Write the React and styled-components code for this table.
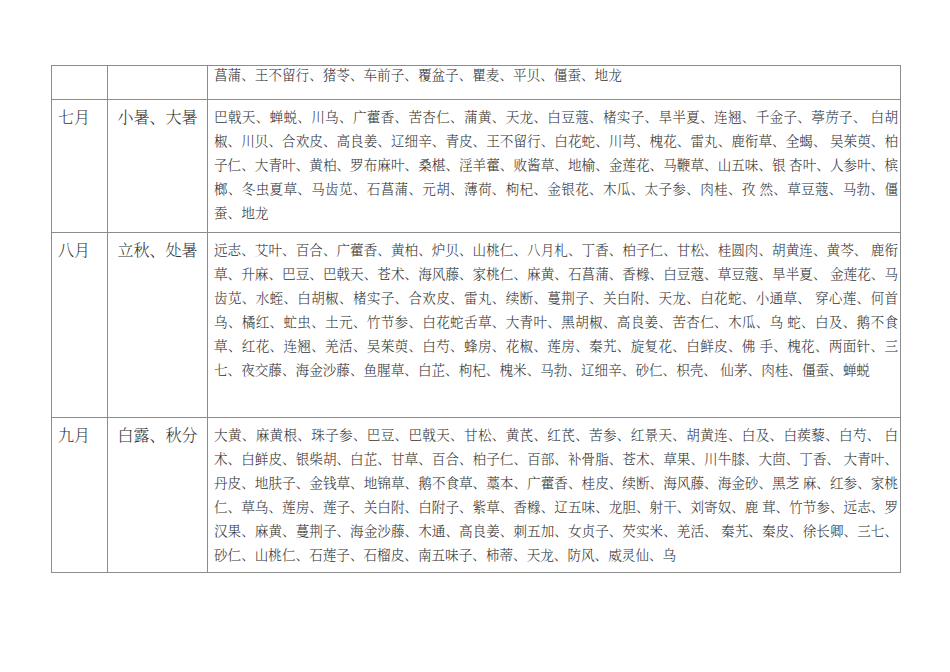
import styled, { createGlobalStyle } from 'styled-components'

const rows = [
  {
    month: '',
    term: '',
    height: 34,
    top: 0,
    lines: ['菖蒲、王不留行、猪苓、车前子、覆盆子、瞿麦、平贝、僵蚕、地龙']
  },
  {
    month: '七月',
    term: '小暑、大暑',
    height: 133,
    top: 6,
    lines: [
      '巴戟天、蝉蜕、川乌、广藿香、苦杏仁、蒲黄、天龙、白豆蔻、楮实子、旱半夏、连翘、千金子、葶苈子、 白胡',
      '椒、川贝、合欢皮、高良姜、辽细辛、青皮、王不留行、白花蛇、川芎、槐花、雷丸、鹿衔草、全蝎、 吴茱萸、柏',
      '子仁、大青叶、黄柏、罗布麻叶、桑椹、淫羊藿、败酱草、地榆、金莲花、马鞭草、山五味、银 杏叶、人参叶、槟',
      '榔、冬虫夏草、马齿苋、石菖蒲、元胡、薄荷、枸杞、金银花、木瓜、太子参、肉桂、孜 然、草豆蔻、马勃、僵',
      '蚕、地龙'
    ]
  },
  {
    month: '八月',
    term: '立秋、处暑',
    height: 185,
    top: 6,
    lines: [
      '远志、艾叶、百合、广藿香、黄柏、炉贝、山桃仁、八月札、丁香、柏子仁、甘松、桂圆肉、胡黄连、黄芩、 鹿衔',
      '草、升麻、巴豆、巴戟天、苍术、海风藤、家桃仁、麻黄、石菖蒲、香橼、白豆蔻、草豆蔻、旱半夏、 金莲花、马',
      '齿苋、水蛭、白胡椒、楮实子、合欢皮、雷丸、续断、蔓荆子、关白附、天龙、白花蛇、小通草、 穿心莲、何首',
      '乌、橘红、虻虫、土元、竹节参、白花蛇舌草、大青叶、黑胡椒、高良姜、苦杏仁、木瓜、乌 蛇、白及、鹅不食',
      '草、红花、连翘、羌活、吴茱萸、白芍、蜂房、花椒、莲房、秦艽、旋复花、白鲜皮、佛 手、槐花、两面针、三',
      '七、夜交藤、海金沙藤、鱼腥草、白芷、枸杞、槐米、马勃、辽细辛、砂仁、枳壳、 仙茅、肉桂、僵蚕、蝉蜕'
    ]
  },
  {
    month: '九月',
    term: '白露、秋分',
    height: 155,
    top: 6,
    lines: [
      '大黄、麻黄根、珠子参、巴豆、巴戟天、甘松、黄芪、红芪、苦参、红景天、胡黄连、白及、白蒺藜、白芍、 白',
      '术、白鲜皮、银柴胡、白芷、甘草、百合、柏子仁、百部、补骨脂、苍术、草果、川牛膝、大茴、丁香、 大青叶、',
      '丹皮、地肤子、金钱草、地锦草、鹅不食草、藁本、广藿香、桂皮、续断、海风藤、海金砂、黑芝 麻、红参、家桃',
      '仁、草乌、莲房、莲子、关白附、白附子、紫草、香橼、辽五味、龙胆、射干、刘寄奴、鹿 茸、竹节参、远志、罗',
      '汉果、麻黄、蔓荆子、海金沙藤、木通、高良姜、刺五加、女贞子、芡实米、羌活、 秦艽、秦皮、徐长卿、三七、',
      '砂仁、山桃仁、石莲子、石榴皮、南五味子、柿蒂、天龙、防风、威灵仙、乌'
    ]
  }
]

export default function App() {
  return (
    <>
      <GlobalStyle />
      <Page>
        <Sheet>
          <colgroup>
            <col style={{ width: 56 }} />
            <col style={{ width: 100 }} />
            <col />
          </colgroup>
          <tbody>
            {rows.map((row, i) => (
              <Row key={i} $h={row.height}>
                <MonthCell $top={row.top}>{row.month}</MonthCell>
                <TermCell $top={row.top}>{row.term}</TermCell>
                <DrugCell $top={row.top}>
                  {row.lines.map((line, j) => (
                    <Line
                      key={j}
                      $last={j === row.lines.length - 1}
                      $tight={row.top === 0}
                    >
                      {line}
                    </Line>
                  ))}
                </DrugCell>
              </Row>
            ))}
          </tbody>
        </Sheet>
      </Page>
    </>
  )
}

const GlobalStyle = createGlobalStyle`
  html, body {
    margin: 0;
    background: #fff;
  }
`

const Page = styled.div`
  width: 950px;
  height: 672px;
  padding: 65px 0 0 51px;
  box-sizing: border-box;
  font-family: 'Liberation Serif', 'Noto Serif CJK SC', 'Noto Sans CJK SC', serif;
  color: #333;
`

const Sheet = styled.table`
  width: 850px;
  border-collapse: collapse;
  table-layout: fixed;
`

const Row = styled.tr`
  height: ${(p) => p.$h}px;
`

const Cell = styled.td`
  border: 1px solid #8c8c8c;
  vertical-align: top;
  padding: ${(p) => p.$top}px 0 0 0;
`

const MonthCell = styled(Cell)`
  padding-left: 6px;
  font-size: 16px;
  line-height: 24px;
  font-weight: 300;
`

const TermCell = styled(Cell)`
  text-align: center;
  font-size: 16px;
  line-height: 24px;
  font-weight: 300;
`

const DrugCell = styled(Cell)`
  padding-left: 6px;
  padding-right: 2px;
  font-size: 13.6px;
  font-weight: 300;
`

const Line = styled.div`
  line-height: ${(p) => (p.$tight ? 20 : 24)}px;
  text-align: justify;
  text-align-last: ${(p) => (p.$last ? 'left' : 'justify')};
  white-space: nowrap;
`
